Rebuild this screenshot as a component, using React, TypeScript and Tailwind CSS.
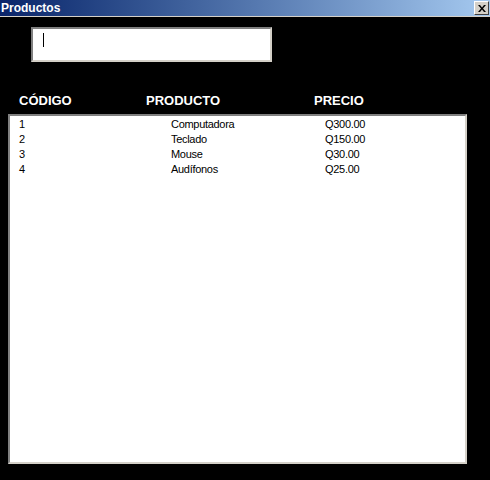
import React from 'react';

const productos = [
  { codigo: '1', nombre: 'Computadora', precio: 'Q300.00' },
  { codigo: '2', nombre: 'Teclado', precio: 'Q150.00' },
  { codigo: '3', nombre: 'Mouse', precio: 'Q30.00' },
  { codigo: '4', nombre: 'Audífonos', precio: 'Q25.00' },
];

export default function App() {
  return (
    <div className="w-[490px] h-[480px] bg-black flex flex-col overflow-hidden font-['Liberation_Sans',Arial,sans-serif]">
      {/* title bar */}
      <div className="h-[16px] flex items-center justify-between bg-gradient-to-r from-[#0a246a] to-[#a6caf0]">
        <span className="pl-[1px] text-[12px] font-bold text-white leading-none">Productos</span>
        <button className="w-[15px] h-[14px] mr-[1px] bg-[#d4d0c8] border-t border-l border-t-white border-l-white border-b border-r border-b-[#404040] border-r-[#404040] flex items-center justify-center">
          <svg width="8" height="7" viewBox="0 0 8 7">
            <path d="M0 0h2l2 2.5L6 0h2L5 3.5 8 7H6L4 4.5 2 7H0l3-3.5z" fill="#000" />
          </svg>
        </button>
      </div>
      <div className="h-[1px] bg-[#d4d0c8]" />

      {/* search box */}
      <div className="pl-[31px] pt-[10px]">
        <div className="w-[241px] h-[35px] bg-white border-2 border-t-[#808080] border-l-[#808080] border-b-[#d4d0c8] border-r-[#d4d0c8] flex items-start pl-[10px] pt-[4px]">
          <div className="w-[1px] h-[14px] bg-black" />
        </div>
      </div>

      {/* headers */}
      <div className="h-[16px] mt-[31px] text-[13px] font-bold text-white leading-[16px]">
        <div className="flex">
          <span className="pl-[19px] w-[146px]">CÓDIGO</span>
          <span className="w-[168px]">PRODUCTO</span>
          <span>PRECIO</span>
        </div>
      </div>

      {/* list */}
      <div className="ml-[8px] mt-[5px] w-[459px] h-[350px] bg-white border-2 border-t-[#808080] border-l-[#808080] border-b-[#d4d0c8] border-r-[#d4d0c8] pt-[1px]">
        {productos.map((p) => (
          <div key={p.codigo} className="flex h-[15px] items-center text-[11px] text-black leading-none tracking-[-0.3px]">
            <span className="pl-[9px] w-[161px]">{p.codigo}</span>
            <span className="w-[154px]">{p.nombre}</span>
            <span>{p.precio}</span>
          </div>
        ))}
      </div>
    </div>
  );
}
